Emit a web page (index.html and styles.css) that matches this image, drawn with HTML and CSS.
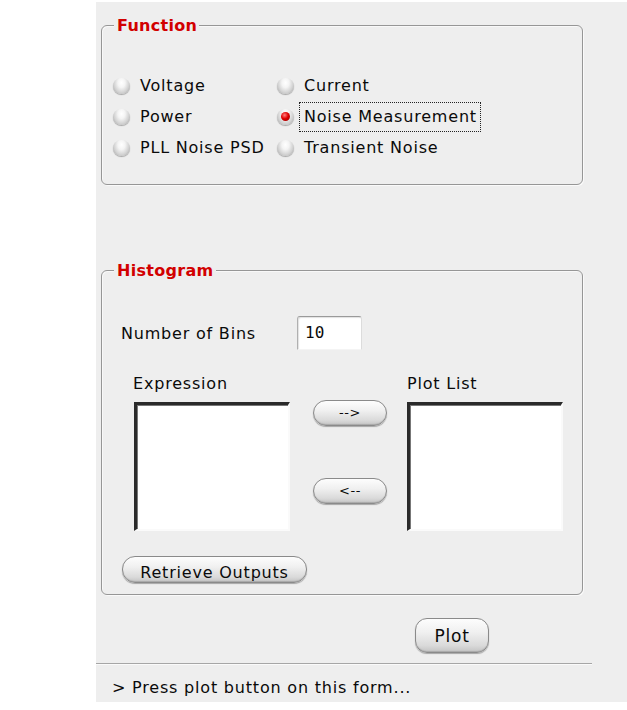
FILE: index.html
```html
<!DOCTYPE html>
<html>
<head>
<meta charset="utf-8">
<link rel="stylesheet" href="styles.css">
</head>
<body>
<div class="panel">
  <div class="group group-func">
    <span class="legend">Function</span>
    <div class="radios">
      <label class="opt"><span class="radio"></span><span class="txt">Voltage</span></label>
      <label class="opt"><span class="radio"></span><span class="txt">Current</span></label>
      <label class="opt"><span class="radio"></span><span class="txt">Power</span></label>
      <label class="opt"><span class="radio checked"></span><span class="txt focus">Noise Measurement</span></label>
      <label class="opt"><span class="radio"></span><span class="txt">PLL Noise PSD</span></label>
      <label class="opt"><span class="radio"></span><span class="txt">Transient Noise</span></label>
    </div>
  </div>

  <div class="group group-hist">
    <span class="legend">Histogram</span>
    <div class="bins-row">
      <span class="bins-label">Number of Bins</span>
      <div class="bins-input">10</div>
    </div>
    <div class="lists">
      <span class="list-label list-label-left">Expression</span>
      <span></span>
      <span class="list-label">Plot List</span>
      <div class="listbox"></div>
      <div class="arrows">
        <button class="btn btn-arrow">--&gt;</button>
        <button class="btn btn-arrow">&lt;--</button>
      </div>
      <div class="listbox"></div>
    </div>
    <button class="btn btn-retrieve">Retrieve Outputs</button>
  </div>

  <div class="plot-row">
    <button class="btn btn-plot">Plot</button>
  </div>
  <div class="separator"></div>
  <div class="status">&gt; Press plot button on this form...</div>
</div>
</body>
</html>
```

FILE: styles.css
```css
html, body {
  margin: 0;
  padding: 0;
  background: #ffffff;
}

body {
  font-family: "DejaVu Sans", "Liberation Sans", sans-serif;
  font-size: 16px;
  color: #0a0a0a;
  letter-spacing: 0.8px;
}

.panel {
  margin-left: 96px;
  margin-top: 2px;
  width: 531px;
  height: 700px;
  background: #eeeeee;
  overflow: hidden;
}

.group {
  position: relative;
  box-sizing: border-box;
  margin-left: 5px;
  width: 482px;
  border: 1px solid #969696;
  border-radius: 6px;
  box-shadow: inset 1px 1px 0 #f8f8f8, 1px 1px 0 #fafafa;
}

.legend {
  position: absolute;
  top: -10px;
  left: 12px;
  padding: 0 2px 0 3px;
  background: #eeeeee;
  color: #d20000;
  font-weight: bold;
  font-size: 16px;
  line-height: 19px;
  letter-spacing: 0.3px;
}

/* Function group */
.group-func {
  margin-top: 23px;
  height: 160px;
  padding: 44px 0 0 11px;
}

.radios {
  display: grid;
  grid-template-columns: 164px 1fr;
  grid-auto-rows: 31px;
}

.opt {
  display: flex;
  align-items: center;
  height: 31px;
}

.radio {
  flex: none;
  width: 17px;
  height: 16px;
  border-radius: 50%;
  background: radial-gradient(ellipse at 50% 30%, #ffffff 0%, #f4f4f4 30%, #cfcfcf 65%, #8a8a8a 100%);
  box-shadow: 0 1px 1px rgba(0,0,0,0.3);
  margin-right: 5px;
  position: relative;
}

.radio.checked::after {
  content: "";
  position: absolute;
  left: 4px;
  top: 3px;
  width: 9px;
  height: 9px;
  border-radius: 50%;
  background: radial-gradient(circle at 40% 35%, #ff8080 0%, #e00000 45%, #8a0000 100%);
}

.txt {
  border: 1px dotted transparent;
  padding: 0 3px 0 4px;
  line-height: 28px;
  white-space: nowrap;
}

.txt.focus {
  border-color: #222;
}

/* Histogram group */
.group-hist {
  margin-top: 85px;
  height: 325px;
  padding: 45px 0 0 19px;
}

.bins-row {
  display: flex;
  align-items: center;
  height: 34px;
}

.bins-label {
  width: 176px;
  line-height: 19px;
}

.bins-input {
  box-sizing: border-box;
  width: 65px;
  height: 34px;
  background: #fff;
  border-top: 1px solid #9a9a9a;
  border-left: 1px solid #b0b0b0;
  border-right: 1px solid #dcdcdc;
  border-bottom: 1px solid #f4f4f4;
  border-radius: 3px 3px 0 0;
  box-shadow: inset 1px 1px 1px rgba(0,0,0,0.12);
  font-family: "DejaVu Sans Mono", "Liberation Mono", monospace;
  font-size: 16px;
  letter-spacing: 0;
  padding-left: 7px;
  line-height: 32px;
}

.lists {
  display: grid;
  grid-template-columns: 156px 23px 74px 20px 156px;
  grid-template-rows: 19px 129px;
  row-gap: 9px;
  margin-top: 24px;
  margin-left: 13px;
}

.lists > :nth-child(1) { grid-column: 1; }
.lists > :nth-child(2) { grid-column: 3; }
.lists > :nth-child(3) { grid-column: 5; }
.lists > :nth-child(4) { grid-column: 1; }
.lists > :nth-child(5) { grid-column: 3; }
.lists > :nth-child(6) { grid-column: 5; }

.list-label {
  line-height: 19px;
  white-space: nowrap;
}

.list-label-left {
  margin-left: -1px;
}

.listbox {
  box-sizing: border-box;
  background: #fff;
  border-top: 3px solid #2a2a2a;
  border-left: 3px solid #2a2a2a;
  border-right: 2px solid #fafafa;
  border-bottom: 2px solid #fafafa;
  box-shadow: inset 1px 1px 0 #777;
}

.arrows {
  display: flex;
  flex-direction: column;
  gap: 52px;
  margin-top: -2px;
}

.btn {
  box-sizing: border-box;
  font-family: "DejaVu Sans", "Liberation Sans", sans-serif;
  font-size: 16px;
  letter-spacing: 0.8px;
  color: #0a0a0a;
  padding: 0;
  margin: 0;
  border: 1px solid #8a8a8a;
  background: linear-gradient(#fdfdfd 0%, #f0f0f0 40%, #dadada 80%, #c4c4c4 100%);
  box-shadow: 0 1px 1px rgba(0,0,0,0.3), inset 0 -1px 1px rgba(0,0,0,0.15);
  display: block;
}

.btn-arrow {
  width: 74px;
  height: 26px;
  border-radius: 13px;
  font-size: 13px;
  letter-spacing: 0.5px;
  line-height: 22px;
}

.btn-retrieve {
  width: 185px;
  height: 27px;
  border-radius: 13px;
  margin-top: 25px;
  margin-left: 1px;
  line-height: 27px;
  padding-top: 2px;
}

.plot-row {
  display: flex;
  padding-left: 319px;
  margin-top: 23px;
}

.btn-plot {
  width: 74px;
  height: 35px;
  border-radius: 12px;
  font-size: 17px;
}

.separator {
  margin-top: 10px;
  width: 496px;
  height: 1px;
  background: #a6a6a6;
  border-bottom: 1px solid #fafafa;
}

.status {
  margin-top: 13px;
  padding-left: 16px;
  line-height: 20px;
  white-space: nowrap;
}
```
